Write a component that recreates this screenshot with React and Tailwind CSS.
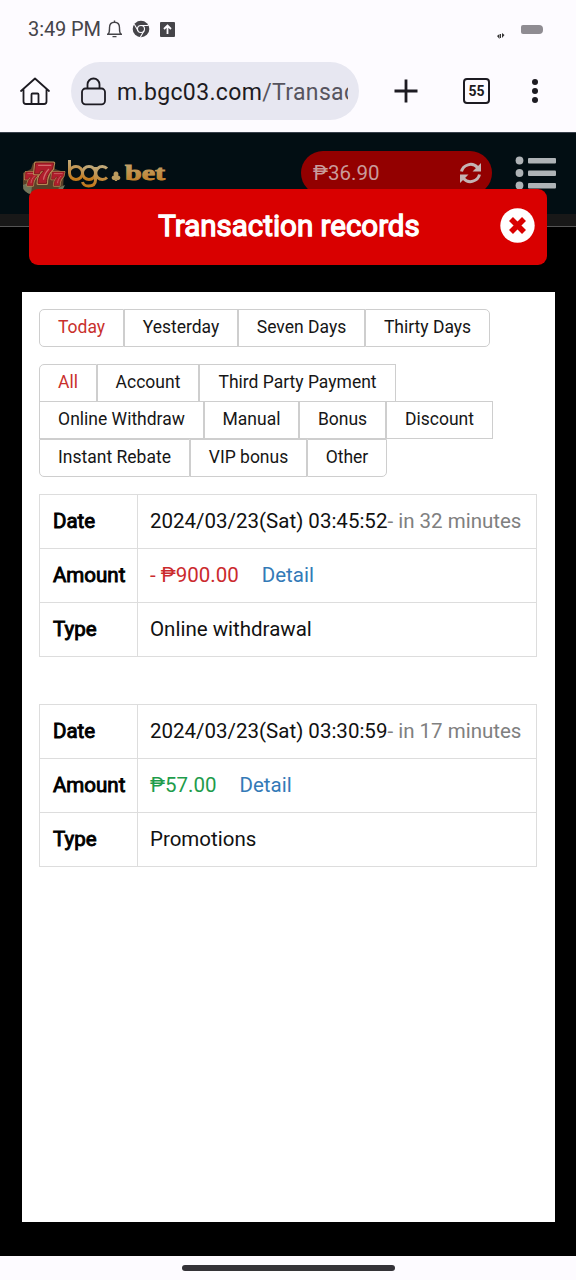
import React from 'react';

const dateFilters = [
  { label: 'Today', width: 'w-[85px]' },
  { label: 'Yesterday', width: 'w-[114px]' },
  { label: 'Seven Days', width: 'w-[127px]' },
  { label: 'Thirty Days', width: 'w-[125px]' },
];

const typeFilters = [
  [
    { label: 'All', width: 'w-[58px]' },
    { label: 'Account', width: 'w-[102px]' },
    { label: 'Third Party Payment', width: 'w-[197px]' },
  ],
  [
    { label: 'Online Withdraw', width: 'w-[165px]' },
    { label: 'Manual', width: 'w-[95px]' },
    { label: 'Bonus', width: 'w-[87px]' },
    { label: 'Discount', width: 'w-[107px]' },
  ],
  [
    { label: 'Instant Rebate', width: 'w-[151px]' },
    { label: 'VIP bonus', width: 'w-[117px]' },
    { label: 'Other', width: 'w-[80px]' },
  ],
];

const records = [
  {
    date: '2024/03/23(Sat) 03:45:52',
    ago: '- in 32 minutes',
    amount: '- ₱900.00',
    color: 'text-[#cb2a2d]',
    type: 'Online withdrawal',
  },
  {
    date: '2024/03/23(Sat) 03:30:59',
    ago: '- in 17 minutes',
    amount: '₱57.00',
    color: 'text-[#1e9c4b]',
    type: 'Promotions',
  },
];

function StatusBar() {
  return (
    <div className="flex h-[58px] items-center pl-7 pr-[33px] text-[#454449]">
      <span className="text-[20px] leading-6 tracking-[-0.1px] whitespace-nowrap">3:49 PM</span>
      <svg className="ml-[5px]" width="17" height="18" viewBox="0 0 17 18" fill="none" stroke="currentColor" strokeWidth="1.4">
        <path d="M1 14.3h15M2.2 14c1.4-1.300 1.300-2.400 1.300-6.200 0-3.400 1.900-5.600 5-5.600s5 2.200 5 5.600c0 3.800-.1 4.900 1.300 6.200M8.500 2.200V.6M6.500 16.600h4" strokeLinejoin="round" />
      </svg>
      <svg className="ml-[9px]" width="18" height="18" viewBox="0 0 18 18">
        <circle cx="9" cy="9" r="8.300" fill="currentColor" />
        <circle cx="9" cy="9" r="3.500" fill="none" stroke="#fdfbff" strokeWidth="1.100" />
        <path d="M9 5.500h7.500M6 10.700L2.300 4.300M12 10.700L8.300 17.200" stroke="#fdfbff" strokeWidth="1.100" />
      </svg>
      <svg className="ml-[9px]" width="17" height="17" viewBox="0 0 17 17">
        <rect x="1" y="1" width="15" height="15" rx="1" fill="currentColor" />
        <path d="M8.500 13V4.500M5 8l3.500-3.500L12 8" fill="none" stroke="#fdfbff" strokeWidth="1.800" />
      </svg>
      <svg className="ml-auto mt-[14px]" width="8" height="6" viewBox="0 0 8 6" fill="#333">
        <path d="M0 3l2.500-2v5zM3 1l1 0v4H3zM5 0l2.500 2L5 5z" />
      </svg>
      <div className="ml-4 h-[9px] w-[22px] rounded-l-[2px] rounded-r-[4px] bg-[#8f8c92]" />
    </div>
  );
}

function BrowserBar() {
  return (
    <div className="flex h-[74px] items-start pt-1 text-[#1d1b22]">
      <svg className="ml-[19px] mt-[14px]" width="32" height="32" viewBox="0 0 32 32" fill="none" stroke="currentColor" strokeWidth="1.800" strokeLinecap="round" strokeLinejoin="round">
        <path d="M2 15L16 2.500 30 15M4.500 13v12.500q0 2.500 2.500 2.500h18q2.500 0 2.500-2.500V13M12.500 28v-9.500q0-1 1-1h5q1 0 1 1V28" />
      </svg>
      <div className="ml-5 flex h-[58px] w-[288px] items-center rounded-full bg-[#e7e7f1] pl-[10px]">
        <svg width="25" height="29" viewBox="0 0 25 29" fill="none" stroke="currentColor" strokeWidth="1.800">
          <rect x="1" y="11.500" width="23" height="15.800" rx="3.500" />
          <path d="M6.500 11.500V7.500a6 6 0 0 1 12 0v4" />
        </svg>
        <div className="ml-[11px] w-[231px] overflow-hidden pt-[3px] text-[23px] leading-8 tracking-[0.35px] whitespace-nowrap">
          m.bgc03.com<span className="text-[#56545e]">/Transac</span>
        </div>
      </div>
      <svg className="ml-[35px] mt-[17px]" width="24" height="24" viewBox="0 0 24 24" stroke="currentColor" strokeWidth="2.800">
        <path d="M12 .5v23M.5 12h23" />
      </svg>
      <div className="ml-[45px] mt-4 flex h-[26px] w-[27px] items-center justify-center rounded-[4px] border-2 border-current text-[14px] font-bold leading-none">
        55
      </div>
      <svg className="ml-10 mt-4" width="10" height="26" viewBox="0 0 10 26" fill="currentColor">
        <circle cx="5" cy="4" r="3" />
        <circle cx="5" cy="13" r="3" />
        <circle cx="5" cy="22" r="3" />
      </svg>
    </div>
  );
}

function Seven({ x, y, s }) {
  return (
    <g transform={`translate(${x} ${y}) scale(${s})`}>
      <path d="M1 0h15l-1 5c-4 4-5 7-5 12H3c0-5 2-8 5-10.500H5L4 9H0z" fill="#b01d2c" stroke="#b58a55" strokeWidth="2.600" strokeLinejoin="round" />
      <path d="M1 0h15l-1 5c-4 4-5 7-5 12H3c0-5 2-8 5-10.500H5L4 9H0z" fill="#b01d2c" stroke="#7c1419" strokeWidth=".8" />
      <path d="M3 2h11M12 5c-3 3-4 5-4.500 9" fill="none" stroke="#cf6a6c" strokeWidth="1" />
    </g>
  );
}

function Logo() {
  return (
    <div className="flex h-[38px] w-[146px] items-start">
      <svg className="shrink-0" width="44" height="38" viewBox="0 0 44 38">
        <path d="M1 14l8-4 2-6 8-2 12 1 2 7 9 3-1 17-6 5H7l-6-5z" fill="#5a4028" />
        <path d="M1 26q6-3 9 1l-1 8q-8-1-8-9zM36 29l7-3-3 6z" fill="#70765c" />
        <Seven x="3" y="13" s=".8" />
        <Seven x="29.500" y="13" s=".8" />
        <Seven x="12.500" y="4" s="1.200" />
      </svg>
      <svg className="shrink-0" width="101" height="36" viewBox="0 0 101 36">
        <defs>
          <linearGradient id="gold" x1="0" y1="0" x2="0" y2="1">
            <stop offset="0" stopColor="#c0a97a" />
            <stop offset="1" stopColor="#c2791c" />
          </linearGradient>
        </defs>
        <g fill="none" stroke="url(#gold)" strokeWidth="3">
          <path d="M3.500 1v13a6.500 6.500 0 1 0 6.500-6.500q-4 0-6.500 4" />
          <circle cx="23" cy="14" r="6.500" />
          <path d="M29.500 8v13q0 6-7 6-5 0-6-4M41 9.500a6.500 6.500 0 1 0 0 9" />
        </g>
        <path d="M50 12.500a2.500 2.500 0 0 1 2 4 2.300 2.300 0 1 1-1.500 4l1 1.500h-3l1-1.500a2.300 2.300 0 1 1-1.500-4 2.500 2.500 0 0 1 2-4z" fill="#bd9c5e" />
        <text x="59" y="21" fontFamily="Liberation Serif, serif" fontSize="22" fontWeight="bold" textLength="40" lengthAdjust="spacingAndGlyphs" fill="url(#gold)" stroke="url(#gold)" strokeWidth=".9">bet</text>
      </svg>
    </div>
  );
}

function SiteHeader() {
  return (
    <div className="h-[95px] border-b-[1.5px] border-[#555] bg-[#181818]">
      <div className="flex h-[82px] items-start border-t border-[#38404b] bg-[#020e13] pl-[22px] pt-[18px]">
        <div className="pt-2">
          <Logo />
        </div>
        <div className="ml-[133px] flex h-[44px] w-[191px] items-center rounded-full bg-[#930000] pl-3 pr-[10px] text-[#c99b9b]">
          <span className="text-[20.5px] leading-6">₱36.90</span>
          <svg className="ml-auto" width="23" height="22" viewBox="0 0 23 22" fill="none" stroke="#c4b4b4" strokeWidth="3">
            <path d="M2.500 9.500C4 3 13-.5 18.500 5.500M20.500 12.500C19 19 10 22.500 4.500 16.500" />
            <path d="M22 1v8.500h-8.500zM1 21v-8.500h8.500z" fill="#c4b4b4" stroke="none" />
          </svg>
        </div>
        <svg className="ml-[23px] mt-[4px]" width="42" height="36" viewBox="0 0 42 36" fill="#aeb3b6">
          <circle cx="4.500" cy="5.500" r="3.900" />
          <circle cx="4.500" cy="18" r="3.900" />
          <circle cx="4.500" cy="30.500" r="3.900" />
          <rect x="13" y="3" width="28" height="5.500" rx="1" />
          <rect x="13" y="15.500" width="28" height="5.500" rx="1" />
          <rect x="13" y="28" width="28" height="5.500" rx="1" />
        </svg>
      </div>
    </div>
  );
}

function FilterButton({ item, active, className }) {
  return (
    <button
      className={`h-[38px] shrink-0 border border-[#cecece] bg-white pb-[2px] text-[17.5px] leading-5 whitespace-nowrap ${item.width} ${active ? 'text-[#c9302c]' : 'text-[#161616]'} ${className}`}
    >
      {item.label}
    </button>
  );
}

function RecordTable({ record }) {
  const label = 'w-[98px] border border-[#dddddd] pl-[13px] text-left font-normal text-black [-webkit-text-stroke:0.9px_black]';
  const value = 'border border-[#dddddd] pl-3 whitespace-nowrap';

  return (
    <table className="w-[498px] table-fixed border-collapse text-[20.5px] leading-6 text-[#111]">
      <tbody>
        <tr className="h-[54px]">
          <th className={label}>Date</th>
          <td className={value}>
            {record.date}
            <span className="text-[#808080]">{record.ago}</span>
          </td>
        </tr>
        <tr className="h-[54px]">
          <th className={label}>Amount</th>
          <td className={value}>
            <span className={record.color}>{record.amount}</span>
            <a className="ml-[23px] text-[#337ab7]">Detail</a>
          </td>
        </tr>
        <tr className="h-[54px]">
          <th className={label}>Type</th>
          <td className={value}>{record.type}</td>
        </tr>
      </tbody>
    </table>
  );
}

export default function App() {
  return (
    <div className="flex h-[1280px] w-[576px] flex-col overflow-hidden bg-[#fdfbff] font-['Roboto',sans-serif]">
      <StatusBar />
      <BrowserBar />

      <div className="h-[1124px] bg-black">
        <SiteHeader />

        {/* Dialog title, overlapping the page header */}
        <div className="relative mx-[29px] -mt-[38px] flex h-[76px] items-center justify-center rounded-[9px] bg-[#d90000]">
          <h1 className="pl-[2px] pb-[2px] text-[29.5px] font-normal leading-8 text-white [-webkit-text-stroke:1.3px_white]">Transaction records</h1>
          <svg className="absolute right-3 top-[19px]" width="35" height="35" viewBox="0 0 35 35">
            <circle cx="17.500" cy="17.500" r="17.200" fill="#fff" />
            <path d="M11 11l13 13M24 11L11 24" stroke="#d90000" strokeWidth="5.600" />
          </svg>
        </div>

        <div className="ml-[22px] mt-[27px] h-[930px] w-[533px] bg-white pl-[17px] pt-[17px]">
          <div className="flex">
            {dateFilters.map((item, i) => (
              <FilterButton key={item.label} item={item} active={i === 0} className="first:rounded-l-[5px] last:rounded-r-[5px]" />
            ))}
          </div>

          <div className="mt-[17px]">
            {typeFilters.map((row, r) => (
              <div key={r} className="-mb-px flex h-[38.3px]">
                {row.map((item, i) => (
                  <FilterButton
                    key={item.label}
                    item={item}
                    active={r === 0 && i === 0}
                    className={r === 0 ? 'first:rounded-tl-[5px]' : r === 2 ? 'first:rounded-bl-[5px] last:rounded-br-[5px]' : ''}
                  />
                ))}
              </div>
            ))}
          </div>

          <div className="mt-[18px] space-y-[47px]">
            {records.map((record) => (
              <RecordTable key={record.date} record={record} />
            ))}
          </div>
        </div>
      </div>

      {/* Gesture bar */}
      <div className="flex h-6 justify-center pt-[9px]">
        <div className="h-[6px] w-[213px] rounded-full bg-[#343238]" />
      </div>
    </div>
  );
}
